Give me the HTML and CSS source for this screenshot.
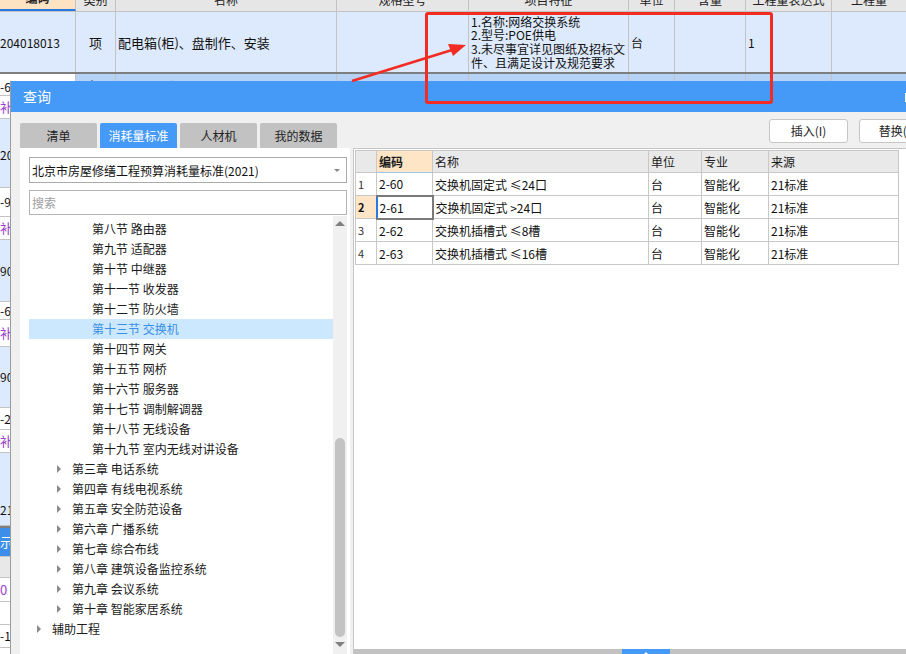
FILE: index.html
```html
<!DOCTYPE html>
<html lang="zh">
<head>
<meta charset="utf-8">
<title>查询</title>
<link rel="stylesheet" href="styles.css">
</head>
<body>
<div class="sheet">
  <div class="s-head">
    <div class="sc c1 hl"><span>编码</span></div>
    <div class="sc c2"><span>类别</span></div>
    <div class="sc c3"><span>名称</span></div>
    <div class="sc c4"><span>规格型号</span></div>
    <div class="sc c5"><span>项目特征</span></div>
    <div class="sc c6"><span>单位</span></div>
    <div class="sc c7"><span>含量</span></div>
    <div class="sc c8"><span>工程量表达式</span></div>
    <div class="sc c9"><span>工程量</span></div>
  </div>
  <div class="s-row">
    <div class="sc c1 code">204018013</div>
    <div class="sc c2 mid">项</div>
    <div class="sc c3 name">配电箱(柜)、盘制作、安装</div>
    <div class="sc c4"></div>
    <div class="sc c5 feat">1.名称:网络交换系统<br>2.型号:POE供电<br>3.未尽事宜详见图纸及招标文<br>件、且满足设计及规范要求</div>
    <div class="sc c6">台</div>
    <div class="sc c7"></div>
    <div class="sc c8">1</div>
    <div class="sc c9"></div>
  </div>
  <div class="s-sep"></div>
  <div class="s-row2">
    <div class="sc c1 wcell">-6.</div>
    <div class="sc c2 mid">柜</div>
    <div class="sc c3 name">交换机固定式 ≤24口</div>
    <div class="sc c4"></div>
    <div class="sc c5"></div>
    <div class="sc c6">台</div>
    <div class="sc c7"></div>
    <div class="sc c8"></div>
    <div class="sc c9"></div>
  </div>
  <div class="strip">
    <div class="st w h23 pur">补</div>
    <div class="st b h69 mid2">20</div>
    <div class="st w h29">-91</div>
    <div class="st w h23 pur">补</div>
    <div class="st b h62">90</div>
    <div class="st w h18">-64</div>
    <div class="st w h27 pur">补</div>
    <div class="st b h61">90</div>
    <div class="st w h22">-25</div>
    <div class="st w h23 pur">补</div>
    <div class="st b h73 low">21</div>
    <div class="st sepd"></div>
    <div class="st sel h29">示</div>
    <div class="st g h21"></div>
    <div class="st w h24 pur">0•</div>
    <div class="st w h23"></div>
    <div class="st w h23">-1</div>
  </div>
</div>

<div class="dlg">
  <div class="dlg-title"><span>查询</span><span class="maxbtn"></span></div>
  <div class="dlg-body">
    <div class="toolbar">
      <div class="tabs">
        <div class="tab">清单</div>
        <div class="tab on">消耗量标准</div>
        <div class="tab">人材机</div>
        <div class="tab">我的数据</div>
      </div>
      <div class="btns">
        <div class="btn">插入(I)</div>
        <div class="btn">替换(R)</div>
      </div>
    </div>
    <div class="panes">
      <div class="lpane">
        <div class="select"><span>北京市房屋修缮工程预算消耗量标准(2021)</span><i class="caret"></i></div>
        <div class="search">搜索</div>
        <div class="treewrap">
          <div class="tree">
            <div class="node l3">第八节 路由器</div>
            <div class="node l3">第九节 适配器</div>
            <div class="node l3">第十节 中继器</div>
            <div class="node l3">第十一节 收发器</div>
            <div class="node l3">第十二节 防火墙</div>
            <div class="node l3 active">第十三节 交换机</div>
            <div class="node l3">第十四节 网关</div>
            <div class="node l3">第十五节 网桥</div>
            <div class="node l3">第十六节 服务器</div>
            <div class="node l3">第十七节 调制解调器</div>
            <div class="node l3">第十八节 无线设备</div>
            <div class="node l3">第十九节 室内无线对讲设备</div>
            <div class="node l2"><i class="tri"></i>第三章 电话系统</div>
            <div class="node l2"><i class="tri"></i>第四章 有线电视系统</div>
            <div class="node l2"><i class="tri"></i>第五章 安全防范设备</div>
            <div class="node l2"><i class="tri"></i>第六章 广播系统</div>
            <div class="node l2"><i class="tri"></i>第七章 综合布线</div>
            <div class="node l2"><i class="tri"></i>第八章 建筑设备监控系统</div>
            <div class="node l2"><i class="tri"></i>第九章 会议系统</div>
            <div class="node l2"><i class="tri"></i>第十章 智能家居系统</div>
            <div class="node l1"><i class="tri"></i>辅助工程</div>
          </div>
          <div class="vscroll">
            <i class="up"></i>
            <div class="track"><div class="thumb"></div></div>
            <i class="down"></i>
          </div>
        </div>
      </div>
      <div class="rpane">
        <div class="gridwrap">
          <table class="grid">
            <colgroup>
              <col class="w-no"><col class="w-code"><col class="w-name"><col class="w-unit"><col class="w-major"><col class="w-src">
            </colgroup>
            <thead>
              <tr><th></th><th class="hl2">编码</th><th>名称</th><th>单位</th><th>专业</th><th>来源</th></tr>
            </thead>
            <tbody>
              <tr><td class="no">1</td><td>2-60</td><td>交换机固定式 ≤24口</td><td>台</td><td>智能化</td><td>21标准</td></tr>
              <tr><td class="no cur">2</td><td class="focus">2-61</td><td>交换机固定式 &gt;24口</td><td>台</td><td>智能化</td><td>21标准</td></tr>
              <tr><td class="no">3</td><td>2-62</td><td>交换机插槽式 ≤8槽</td><td>台</td><td>智能化</td><td>21标准</td></tr>
              <tr><td class="no">4</td><td>2-63</td><td>交换机插槽式 ≤16槽</td><td>台</td><td>智能化</td><td>21标准</td></tr>
            </tbody>
          </table>
        </div>
        <div class="hbar"><span class="hthumb"><i></i></span></div>
      </div>
    </div>
  </div>
</div>

<div class="mark"></div>
<svg class="arrow" width="906" height="120" viewBox="0 0 906 120">
  <line x1="352" y1="81" x2="452" y2="50" stroke="#f22c22" stroke-width="2.6"/>
  <polygon points="466,45 448,44 453,56" fill="#f22c22"/>
</svg>
</body>
</html>
```

FILE: styles.css
```css
* { box-sizing: border-box; margin: 0; padding: 0; }
body {
  width: 906px; height: 654px; overflow: hidden; position: relative;
  background: #fff;
  font-family: "Noto Sans CJK SC", "Noto Sans", sans-serif;
  font-size: 12px; color: #111;
}

/* background sheet */
.sheet { width: 906px; }
.s-head, .s-row, .s-row2 { display: flex; }
.sc { border-right: 1px solid #c3c3c3; overflow: hidden; white-space: nowrap; display: flex; align-items: center; }
.c1 { width: 76px; } .c2 { width: 40px; } .c3 { width: 221px; } .c4 { width: 132px; }
.c5 { width: 160px; } .c6 { width: 46px; } .c7 { width: 71px; } .c8 { width: 86px; } .c9 { width: 74px; border-right: 0; }
.s-head { height: 12px; background: #e6e6e6; border-bottom: 1px solid #c3c3c3; }
.s-head .sc { align-items: flex-end; justify-content: center; color: #222; }
.s-head .sc span { line-height: 22px; font-size: 12px; }
.s-head .hl { background: #fde3c2; border-bottom: 2px solid #2a78e0; font-weight: bold; }
.s-row { height: 60px; background: #dde9fc; }
.s-row .sc { padding-left: 2px; font-size: 12px; }
.s-row .name { font-size: 13px; }
.mid { justify-content: center; padding-left: 0 !important; font-size: 13px !important; }
.code { padding-left: 0 !important; font-size: 12px; }
.feat { white-space: normal; line-height: 13.7px; font-size: 12px; align-items: center; }
.s-sep { height: 2px; background: #7e7e7e; }
.s-row2 { height: 22px; background: #b6d2f7; border-bottom: 1px solid #c3c3c3; }
.s-row2 .sc { padding-left: 2px; align-items: flex-start; padding-top: 4px; }
.s-row2 .mid { padding-top: 2px; }
.wcell { background: #fff; padding-left: 0 !important; }
.strip { width: 11px; overflow: hidden; white-space: nowrap; }
.st { border-bottom: 1px solid #c3c3c3; display: flex; align-items: center; font-size: 12px; line-height: 14px; }
.st.w { background: #fff; }
.st.b { background: #dde9fc; }
.st.g { background: #e8e8e8; }
.st.sel { background: #3d8ee8; color: #fff; font-size: 13px; }
.st.pur { color: #9a3fc8; font-size: 13px; }
.st.low { align-items: flex-end; padding-bottom: 8px; }
.st.mid2 { padding-top: 4px; }
.st.sepd { height: 2px; background: #7e7e7e; border: 0; }
.h18 { height: 18px; } .h21 { height: 21px; } .h22 { height: 22px; } .h23 { height: 23px; } .h24 { height: 24px; }
.h27 { height: 27px; } .h29 { height: 29px; } .h61 { height: 61px; } .h62 { height: 62px; } .h69 { height: 69px; } .h73 { height: 73px; }

/* dialog */
.dlg {
  position: absolute; left: 10px; top: 81px; width: 910px; height: 574px;
  background: #f0f0f0; border-left: 1px solid #9c9c9c;
  display: flex; flex-direction: column;
}
.dlg-title {
  height: 31px; background: #459af7; color: #fff; font-size: 14px; line-height: 31px;
  padding-left: 12px; display: flex; align-items: center; flex-shrink: 0;
}
.maxbtn { margin-left: auto; margin-right: 5px; width: 10px; height: 9px; border: 2px solid #fff; margin-top: 1px; }
.dlg-body { flex: 1; display: flex; flex-direction: column; padding-left: 9px; }
.toolbar { height: 36px; display: flex; flex-shrink: 0; }
.tabs { display: flex; gap: 3px; margin-top: 11px; height: 25px; }
.tab {
  width: 77px; height: 25px; background: #c2c2c2; border-radius: 2px 2px 0 0;
  color: #222; font-size: 12px; line-height: 25px; text-align: center;
}
.tab.on { background: #459af7; color: #fff; }
.btns { display: flex; gap: 11px; margin-left: 432px; margin-top: 7px; height: 24px; }
.btn {
  width: 79px; height: 24px; background: #fff; border: 1px solid #c6c6c6; border-radius: 3px;
  font-size: 12px; line-height: 22px; text-align: center; color: #222;
}

.panes { flex: 1; display: flex; }
.lpane { width: 330px; background: #fff; padding: 9px 0 0 9px; display: flex; flex-direction: column; }
.select {
  width: 318px; height: 26px; border: 1px solid #ababab; display: flex; align-items: center;
  padding-left: 2px; font-size: 12px; color: #111; flex-shrink: 0;
}
.caret { margin-left: auto; margin-right: 6px; width: 0; height: 0; border-left: 3px solid transparent; border-right: 3px solid transparent; border-top: 3px solid #888; }
.search {
  width: 318px; height: 25px; border: 1px solid #b4b4b4; margin-top: 7px; padding-left: 2px;
  color: #a0a0a0; font-size: 12px; line-height: 23px; flex-shrink: 0;
}
.treewrap { flex: 1; display: flex; margin-top: 1px; min-height: 0; }
.tree { width: 304px; padding-top: 3px; }
.node { height: 20px; line-height: 20px; font-size: 12px; color: #1a1a1a; display: flex; align-items: center; white-space: nowrap; }
.node.l3 { padding-left: 63px; }
.node.l2 { padding-left: 28px; }
.node.l1 { padding-left: 8px; }
.node.active { background: #cce8ff; color: #3b8fe6; }
.tri { width: 0; height: 0; border-top: 4px solid transparent; border-bottom: 4px solid transparent; border-left: 4px solid #8a8a8a; margin-right: 11px; }
.vscroll { width: 14px; background: #f0f0f0; display: flex; flex-direction: column; align-items: center; }
.up { margin-top: 5px; width: 0; height: 0; border-left: 5px solid transparent; border-right: 5px solid transparent; border-bottom: 5px solid #808080; }
.track { flex: 1; width: 100%; display: flex; flex-direction: column; justify-content: flex-end; padding: 0 2px 5px; }
.thumb { height: 199px; background: #c3c3c3; border-radius: 5px; }
.down { margin-bottom: 8px; width: 0; height: 0; border-left: 5px solid transparent; border-right: 5px solid transparent; border-top: 5px solid #808080; }

.rpane { flex: 1; display: flex; flex-direction: column; margin-left: 3px; background: #fff; border-left: 1px solid #c6c6c6; border-top: 1px solid #c6c6c6; }
.gridwrap { flex: 1; padding: 1px 0 0 1px; }
.grid { border-collapse: collapse; table-layout: fixed; width: 543px; }
.w-no { width: 21px; } .w-code { width: 56px; } .w-name { width: 216px; } .w-unit { width: 53px; } .w-major { width: 67px; } .w-src { width: 130px; }
.grid th, .grid td { border: 1px solid #c8c8c8; text-align: left; padding: 0 2px; white-space: nowrap; overflow: hidden; font-size: 12px; }
.grid th { height: 22px; background: #e9e9e9; font-weight: normal; color: #1a1a1a; }
.grid th.hl2 { background: #fde5c6; font-weight: bold; border-bottom: 1px solid #9ec4ee; }
.grid td { height: 23px; color: #111; }
.grid td.no { padding-left: 2px; font-size: 11px; color: #333; }
.grid td.cur { background: #fde5c6; font-weight: bold; color: #111; }
.grid td.focus { border: 2px solid #7a7a7a; border-left: 2px solid #2a7ae4; }
.hbar { height: 6px; background: #c2c2c2; display: flex; padding-left: 268px; flex-shrink: 0; }
.hthumb { width: 48px; height: 6px; background: #459af7; display: flex; justify-content: center; align-items: flex-end; }
.hthumb i { width: 0; height: 0; border-left: 3px solid transparent; border-right: 3px solid transparent; border-bottom: 3px solid #fff; }

/* annotation overlay */
.mark { position: absolute; left: 425px; top: 12px; width: 348px; height: 92px; border: 3px solid #f22c22; border-radius: 3px; }
.arrow { position: absolute; left: 0; top: 0; }
```
